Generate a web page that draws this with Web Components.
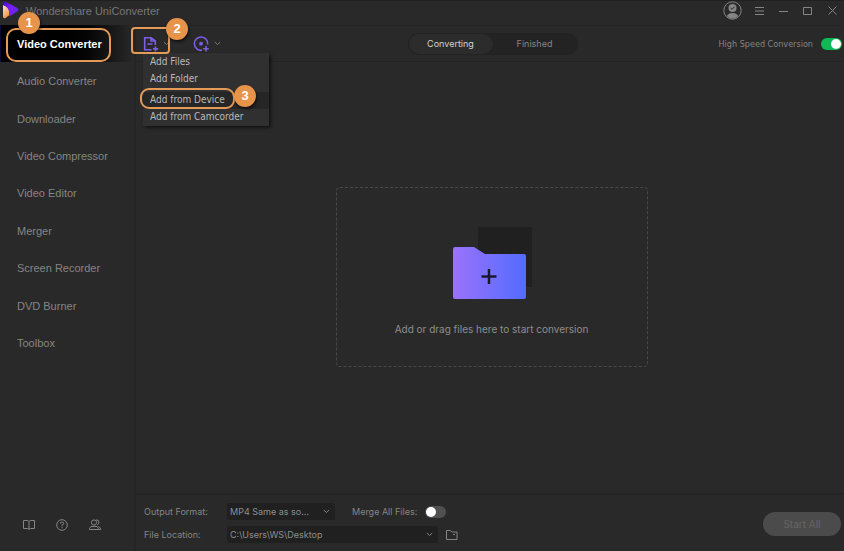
<!DOCTYPE html>
<html lang="en">
<head>
<meta charset="utf-8">
<title>Wondershare UniConverter</title>
<style>
html,body{margin:0;height:100%;background:#292929}
body{font:11px/16px "Liberation Sans",sans-serif;color:#858585}
</style>
</head>
<body>
<uni-app></uni-app>
<script>
const base = `*{box-sizing:border-box}button,select{font:inherit;color:inherit;background:none;border:0;padding:0;margin:0}svg{display:block;fill:none;stroke:currentColor}`;
const define = (name, css, html) => customElements.define(name, class extends HTMLElement {
  constructor() {
    super();
    const t = document.createElement('template');
    t.innerHTML = `<style>${base}${css}</style>${typeof html === 'function' ? html(this) : html}`;
    this.attachShadow({mode: 'open'}).append(t.content.cloneNode(true));
  }
});

define('step-badge', `:host{display:grid;place-items:center;width:22px;height:22px;border-radius:50%;background:#e8934a;color:#fff;font:bold 13px/22px "Liberation Sans",sans-serif;box-shadow:1px 2px 3px #0009}`, `<slot></slot>`);

define('toggle-switch', `:host{display:block}
label{display:flex;align-items:center;gap:8px}
input{appearance:none;margin:0;width:21px;height:12px;border-radius:6px;background:#505050;display:flex;align-items:center;padding:1px}
input::before{content:"";width:10px;height:10px;border-radius:50%;background:#fff}
input:checked{background:#0fb955;justify-content:flex-end}`,
el => `<label><slot></slot><input type="checkbox" ${el.hasAttribute('on') ? 'checked' : ''}></label>`);

define('drop-select', `:host{display:grid;align-items:center;background:#202020;border-radius:2px}
select{appearance:none;grid-area:1/1;width:100%;height:17px;padding:0 20px 0 3px;line-height:17px;color:#8e8e8e}
svg{grid-area:1/1;justify-self:end;margin-right:5px;pointer-events:none}`,
el => `<select aria-label="${el.getAttribute('label')}"><option>${el.getAttribute('value')}</option></select><svg width="7" height="5" stroke="#777"><path d="M.8 1l2.7 2.5L6.2 1"/></svg>`);

define('title-bar', `:host{display:flex;align-items:center;height:25px;padding:0 0 5px 2px;border-top:1px solid #202020;gap:6px}
.logo{stroke:none;flex:none}
.name{flex:1;color:#777}
.win{display:flex;align-items:center;color:#858585}
button{display:grid;place-items:center;width:24px;height:20px}
.user{width:31px}`, `
<svg class="logo" width="18" height="19" viewBox="0 0 18 19"><defs><linearGradient id="a" x2="1" y2=".3"><stop stop-color="#3a10c8"/><stop offset=".55" stop-color="#7d1cff"/><stop offset="1" stop-color="#5e27db"/></linearGradient><linearGradient id="b" x2=".6" y2="1"><stop stop-color="#ffe6cc"/><stop offset="1" stop-color="#ee9040"/></linearGradient></defs><path fill="url(#b)" d="M1 4L8 7 7.500 14 3.500 17Q1 18 1 15z"/><path fill="url(#a)" d="M1 3Q1 0 4 1L15.500 7q2 2 0 3.500L7 15.500Q8 8.500 4 5.500L1 4z"/></svg>
<span class="name">Wondershare UniConverter</span>
<div class="win">
<button class="user" aria-label="Account"><svg width="19" height="19"><circle cx="9.5" cy="9.5" r="8.7"/><circle cx="9.5" cy="7" r="4" fill="currentColor" stroke="none"/><path d="M3.8 15q1.5-3 5.7-3t5.7 3q-2.5 2.800-5.700 2.800T3.800 15z" fill="currentColor" stroke="none"/><path d="M7.700 7l1.300 1.300 2.400-2.500" stroke="#292929"/></svg></button>
<button aria-label="Menu"><svg width="10" height="8"><path d="M0 .5h9M0 4h9M0 7.500h9"/></svg></button>
<button aria-label="Minimize"><svg width="10" height="8"><path d="M0 4.500h9"/></svg></button>
<button aria-label="Maximize"><svg width="10" height="8"><path d="M.5.5h8v7h-8z"/></svg></button>
<button aria-label="Close"><svg width="9" height="9"><path d="M.5.5l8 8M8.500.5l-8 8"/></svg></button>
</div>`);

define('nav-item', `:host{display:block;position:relative}
a{display:flex;align-items:center;height:100%;padding-left:17px;color:inherit;text-decoration:none}
:host([active]){color:#fff;font-weight:700;background:linear-gradient(90deg,#000 50%,#050505 65%,#292929);border-left:1px solid #100838}
:host([active]) a{padding-left:16px}
.ring,step-badge{display:none}
:host([active]) .ring{display:block;position:absolute;left:5px;right:23px;top:3px;bottom:0;border:2px solid #e49a58;border-radius:10px;pointer-events:none}
:host([active]) step-badge{display:grid;position:absolute;left:17px;top:-13px}`,
`<a href="#"><slot></slot></a><span class="ring"></span><step-badge>1</step-badge>`);

define('side-bar', `:host{display:flex;flex-direction:column;justify-content:space-between;border-right:2px solid #242424}
nav{display:grid;grid-auto-rows:1fr;height:337px}
.tools{display:flex;gap:21px;padding:0 0 20px 23px;color:#858585}`, `
<nav><nav-item active>Video Converter</nav-item><nav-item>Audio Converter</nav-item><nav-item>Downloader</nav-item><nav-item>Video Compressor</nav-item><nav-item>Video Editor</nav-item><nav-item>Merger</nav-item><nav-item>Screen Recorder</nav-item><nav-item>DVD Burner</nav-item><nav-item>Toolbox</nav-item></nav>
<div class="tools">
<button aria-label="Guide"><svg width="12" height="12"><path d="M.5 1.500h4.200L6 2.500l1.300-1H11.500v8H7.300L6 10.500l-1.300-1H.5zM6 2.500v8"/></svg></button>
<button aria-label="Help"><svg width="12" height="12"><circle cx="6" cy="6" r="5.300"/><path d="M4.300 4.700q0-1.700 1.700-1.700t1.700 1.500Q7.700 5.500 6 6.200v1M6 8v1.200"/></svg></button>
<button aria-label="Community"><svg width="12" height="12"><circle cx="5" cy="3.500" r="2.600"/><path d="M7 1q2.800-.7 3 2 0 2-1.700 2.800M.5 10.500V9.500L2 7.500h6l1.500 2v1zM9.500 7.300l2 2v1.200h-2"/></svg></button>
</div>`);

define('add-menu', `:host{display:block;width:126px;padding-top:1px;background:#303030;box-shadow:2px 2px 3px #0008;font:10px/16px "DejaVu Sans Condensed","Noto Sans",sans-serif;color:#bababa}
button{display:block;width:100%;height:17px;padding-left:7px;text-align:left;white-space:nowrap}
.pick{position:relative;margin-top:4px;background:#262626}
.ring{position:absolute;left:-3px;right:34px;top:-4px;bottom:0;border:2px solid #e49a58;border-radius:9px}
step-badge{position:absolute;left:91px;top:-7px}`, `
<button>Add Files</button><button>Add Folder</button><button class="pick">Add from Device<span class="ring"></span><step-badge>3</step-badge></button><button>Add from Camcorder</button>`);

define('tool-bar', `:host{display:grid;grid-template-columns:1fr auto 1fr;align-items:center;height:37px;padding-left:5px;border-top:1px solid #242424;border-bottom:1px solid #232323}
.left{display:flex;gap:23px;padding-left:2px}
.add{position:relative}
.add>button,.disc{display:flex;align-items:center;gap:4px;color:#7c5de8}
.chev{color:#777}
.ring{position:absolute;left:-12px;top:-9px;width:39px;height:27px;border:2px solid #e49a58;border-radius:4px;pointer-events:none;z-index:3}
step-badge{position:absolute;left:23px;top:-18px;z-index:3}
add-menu{position:absolute;left:0;top:17px;z-index:2}
.seg{display:flex;background:#232323;border-radius:11px;padding:1px;font:9px/16px Inter,sans-serif}
.seg button{width:84px;height:20px;border-radius:10px}
.seg .on{background:#2c2c2c;color:#d2d2d2}
toggle-switch{justify-self:end;padding-right:2px;font:9px/16px "DejaVu Sans Condensed","Noto Sans",sans-serif}`, `
<div class="left">
<div class="add"><button aria-label="Add files"><svg width="16" height="16" stroke-width="1.600"><path d="M8.500 13.700H1.700V1.700h6.500L12.300 5v4M8 1.700V5h4M4.500 8h5M12.500 10.300v5.200M10 12.900h5.200"/></svg><svg class="chev" width="7" height="5"><path d="M.8 1l2.700 2.500L6.200 1"/></svg></button><span class="ring"></span><add-menu></add-menu><step-badge>2</step-badge></div>
<button class="disc" aria-label="Add disc"><svg width="17" height="16" stroke-width="1.600"><path d="M9 14.300A6.700 6.700 0 1 1 14.700 8.500M13 10v5.600M10.200 12.800h5.600"/><circle cx="8" cy="7.700" r="1.900" fill="currentColor" stroke="none"/></svg><svg class="chev" width="7" height="5"><path d="M.8 1l2.700 2.500L6.200 1"/></svg></button>
</div>
<div class="seg"><button class="on">Converting</button><button>Finished</button></div>
<toggle-switch on>High Speed Conversion</toggle-switch>`);

define('drop-zone', `:host{display:grid;place-items:center;padding:0 0 2px 3px}
button{display:flex;flex-direction:column;align-items:center;width:44%;min-width:312px;height:180px;padding-top:39px;gap:20px;border:1px dashed #484848;border-radius:4px;color:#8e8e8e;font:10px/16px Inter,sans-serif}
svg{stroke:none;margin-right:4px}`, `
<button><svg width="84" height="74" viewBox="0 0 84 74"><defs><linearGradient id="f"><stop stop-color="#9b72fc"/><stop offset="1" stop-color="#526cff"/></linearGradient></defs><path d="M30 0h54v60H30z" fill="#202020"/><path d="M7 20H26L37 27H76Q78 27 78 29V70Q78 72 76 72H7Q5 72 5 70V22Q5 20 7 20z" fill="url(#f)"/><path d="M41 42v15M33.500 49.500h15" stroke="#1b1932" stroke-width="2.500"/></svg><span>Add or drag files here to start conversion</span></button>`);

define('output-bar', `:host{display:flex;align-items:center;justify-content:space-between;height:58px;padding:0 3px 0 8px;border-top:2px solid #242424;font:9px/16px Inter,sans-serif}
.form{display:grid;grid-template-columns:83px 108px 103px auto;row-gap:6px;align-items:center}
.path{grid-column:2/4}
toggle-switch{grid-column:3/5;padding-left:17px}
.folder{margin-left:8px}
.start{width:78px;height:24px;margin-top:2px;border-radius:12px;background:#4b4b4b;color:#656565;font-size:10px}`, `
<div class="form"><span>Output Format:</span><drop-select label="Output Format" value="MP4 Same as so..."></drop-select><toggle-switch>Merge All Files:</toggle-switch>
<span>File Location:</span><drop-select class="path" label="File Location" value="C:\\Users\\WS\\Desktop"></drop-select><button class="folder" aria-label="Open folder"><svg width="12" height="10"><path d="M.5 9.500v-9h4l1.300 1.500H11v7.500zM7 4.500h2"/></svg></button></div>
<button class="start">Start All</button>`);

define('uni-app', `:host{display:grid;grid-template:auto 1fr / 136px 1fr;min-height:100vh;background:#292929}
title-bar{grid-column:1/-1}
main{display:grid;grid-template-rows:auto 1fr auto;min-width:0}`, `
<title-bar></title-bar><side-bar></side-bar><main><tool-bar></tool-bar><drop-zone></drop-zone><output-bar></output-bar></main>`);
</script>
</body>
</html>
